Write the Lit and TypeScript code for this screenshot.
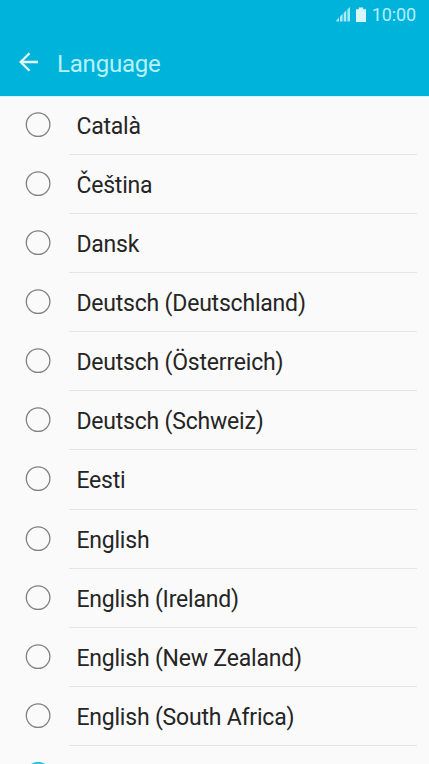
import { LitElement, html, css } from "lit";
import { customElement } from "lit/decorators.js";

const LANGUAGES = [
  "Català", "Čeština", "Dansk", "Deutsch (Deutschland)", "Deutsch (Österreich)",
  "Deutsch (Schweiz)", "Eesti", "English", "English (Ireland)",
  "English (New Zealand)", "English (South Africa)",
];

@customElement("app-root")
export class AppRoot extends LitElement {
  static styles = css`
    :host { display: flex; flex-direction: column; height: 764px; overflow: hidden; background: #fafafa; font-family: Roboto, sans-serif; color: #252525; }
    header { height: 96px; flex: none; background: #00b3db; display: flex; flex-direction: column; box-shadow: 0 1px 0 #d2f5fc; }
    .status { height: 30px; display: flex; justify-content: flex-end; align-items: center; padding-right: 13px; color: #b4eefa; font-size: 18px; letter-spacing: -0.1px; line-height: 30px; }
    .signal { width: 15px; height: 15px; margin: 0 5px 1px 0; }
    .battery { width: 10px; height: 15px; margin: 0 6px 1px 0; }
    .bar { height: 66px; display: flex; align-items: center; padding-left: 19px; }
    .back { width: 20px; height: 20px; margin: 0 18px 2px 0; }
    .title { font-size: 24px; letter-spacing: -0.2px; line-height: 30px; padding-top: 1px; color: #b9f1fb; }
    .row { height: 59.08px; flex: none; display: flex; padding: 0 12px 0 25px; }
    .radio { flex: none; width: 26px; height: 26px; margin: 16px 18px 0 0; fill: none; stroke: #808080; stroke-width: 1.3; }
    .selected { stroke: #1fbfe0; stroke-width: 1.8; }
    .label { flex: 1; box-sizing: border-box; padding: 2px 0 0 7.4px; font-size: 23px; letter-spacing: -0.2px; line-height: 57px; border-bottom: 1px solid #e5e5e5; white-space: nowrap; }
  `;

  private radio(selected = false) {
    return html`<svg class="radio ${selected ? "selected" : ""}" viewBox="0 0 26 26"><circle cx="13.1" cy="12.6" r="11.8"/></svg>`;
  }

  render() {
    return html`
      <header>
        <div class="status">
          <svg class="signal" viewBox="0 0 15 15" fill="#a5e8f6"><path d="M0.5 14.5V13L3 10.5V14.5zM4 14.5V9.5L6.6 7V14.5zM7.7 14.5V6L10.3 3.4V14.5zM11.4 14.5V2.4L14 0V14.5z"/></svg>
          <svg class="battery" viewBox="0 0 10 15" fill="#d8f7fc"><path d="M2.8 0.5h4.4v1.8H10V15H0V2.3h2.8z"/></svg>
          <span>10:00</span>
        </div>
        <div class="bar">
          <svg class="back" viewBox="0 0 20 20" fill="none" stroke="#e4fafe" stroke-width="2.3"><path d="M19 10H2M10.5 1.2L1.7 10L10.5 18.8"/></svg>
          <span class="title">Language</span>
        </div>
      </header>
      ${LANGUAGES.map((name) => html`<div class="row">${this.radio()}<span class="label">${name}</span></div>`)}
      <div class="row">${this.radio(true)}</div>
    `;
  }
}
